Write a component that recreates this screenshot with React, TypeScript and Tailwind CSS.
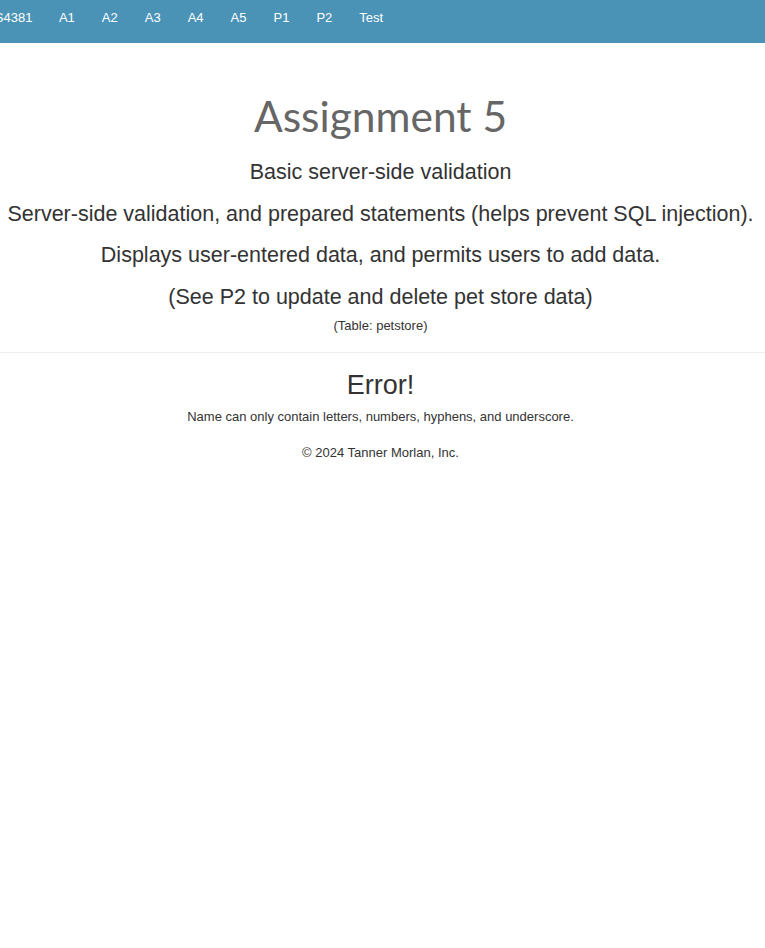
import React from "react";

const navItems = ["A1", "A2", "A3", "A4", "A5", "P1", "P2", "Test"];

export default function App() {
  return (
    <div className="min-h-[948px] bg-white" style={{ fontFamily: '"Liberation Sans", Arial, sans-serif' }}>
      <nav className="h-[43px] bg-[#4b93b6] flex items-start pt-[9px] overflow-hidden text-[13px] leading-[17px] text-white">
        <span className="ml-[-16px] mr-[13px]">LIS4381</span>
        {navItems.map((t) => (
          <span key={t} className="px-[13.5px]">{t}</span>
        ))}
      </nav>
      <div className="flex flex-col items-center pr-[4px] text-[#333]">
        <h1 className="mt-[50px] text-[42.5px] leading-[1.1] text-[#666]" style={{ fontFamily: 'Lato, "Open Sans", sans-serif' }}>Assignment 5</h1>
        <p className="mt-[21px] text-[21.5px] leading-[22px]">Basic server-side validation</p>
        <p className="mt-[20px] text-[21.5px] leading-[22px]">Server-side validation, and prepared statements (helps prevent SQL injection).</p>
        <p className="mt-[19px] text-[21.5px] leading-[22px]">Displays user-entered data, and permits users to add data.</p>
        <p className="mt-[20px] text-[21.5px] leading-[22px]">(See P2 to update and delete pet store data)</p>
        <p className="mt-[9px] text-[13px] leading-[17px]">(Table: petstore)</p>
      </div>
      <hr className="mt-[18px] border-t border-[#eee]" />
      <div className="flex flex-col items-center pr-[4px] text-[#333]">
        <h2 className="mt-[18px] text-[27px] leading-[1.1]">Error!</h2>
        <p className="mt-[8px] text-[13px] leading-[17px]">Name can only contain letters, numbers, hyphens, and underscore.</p>
        <p className="mt-[19px] text-[13px] leading-[17px]">© 2024 Tanner Morlan, Inc.</p>
      </div>
    </div>
  );
}
